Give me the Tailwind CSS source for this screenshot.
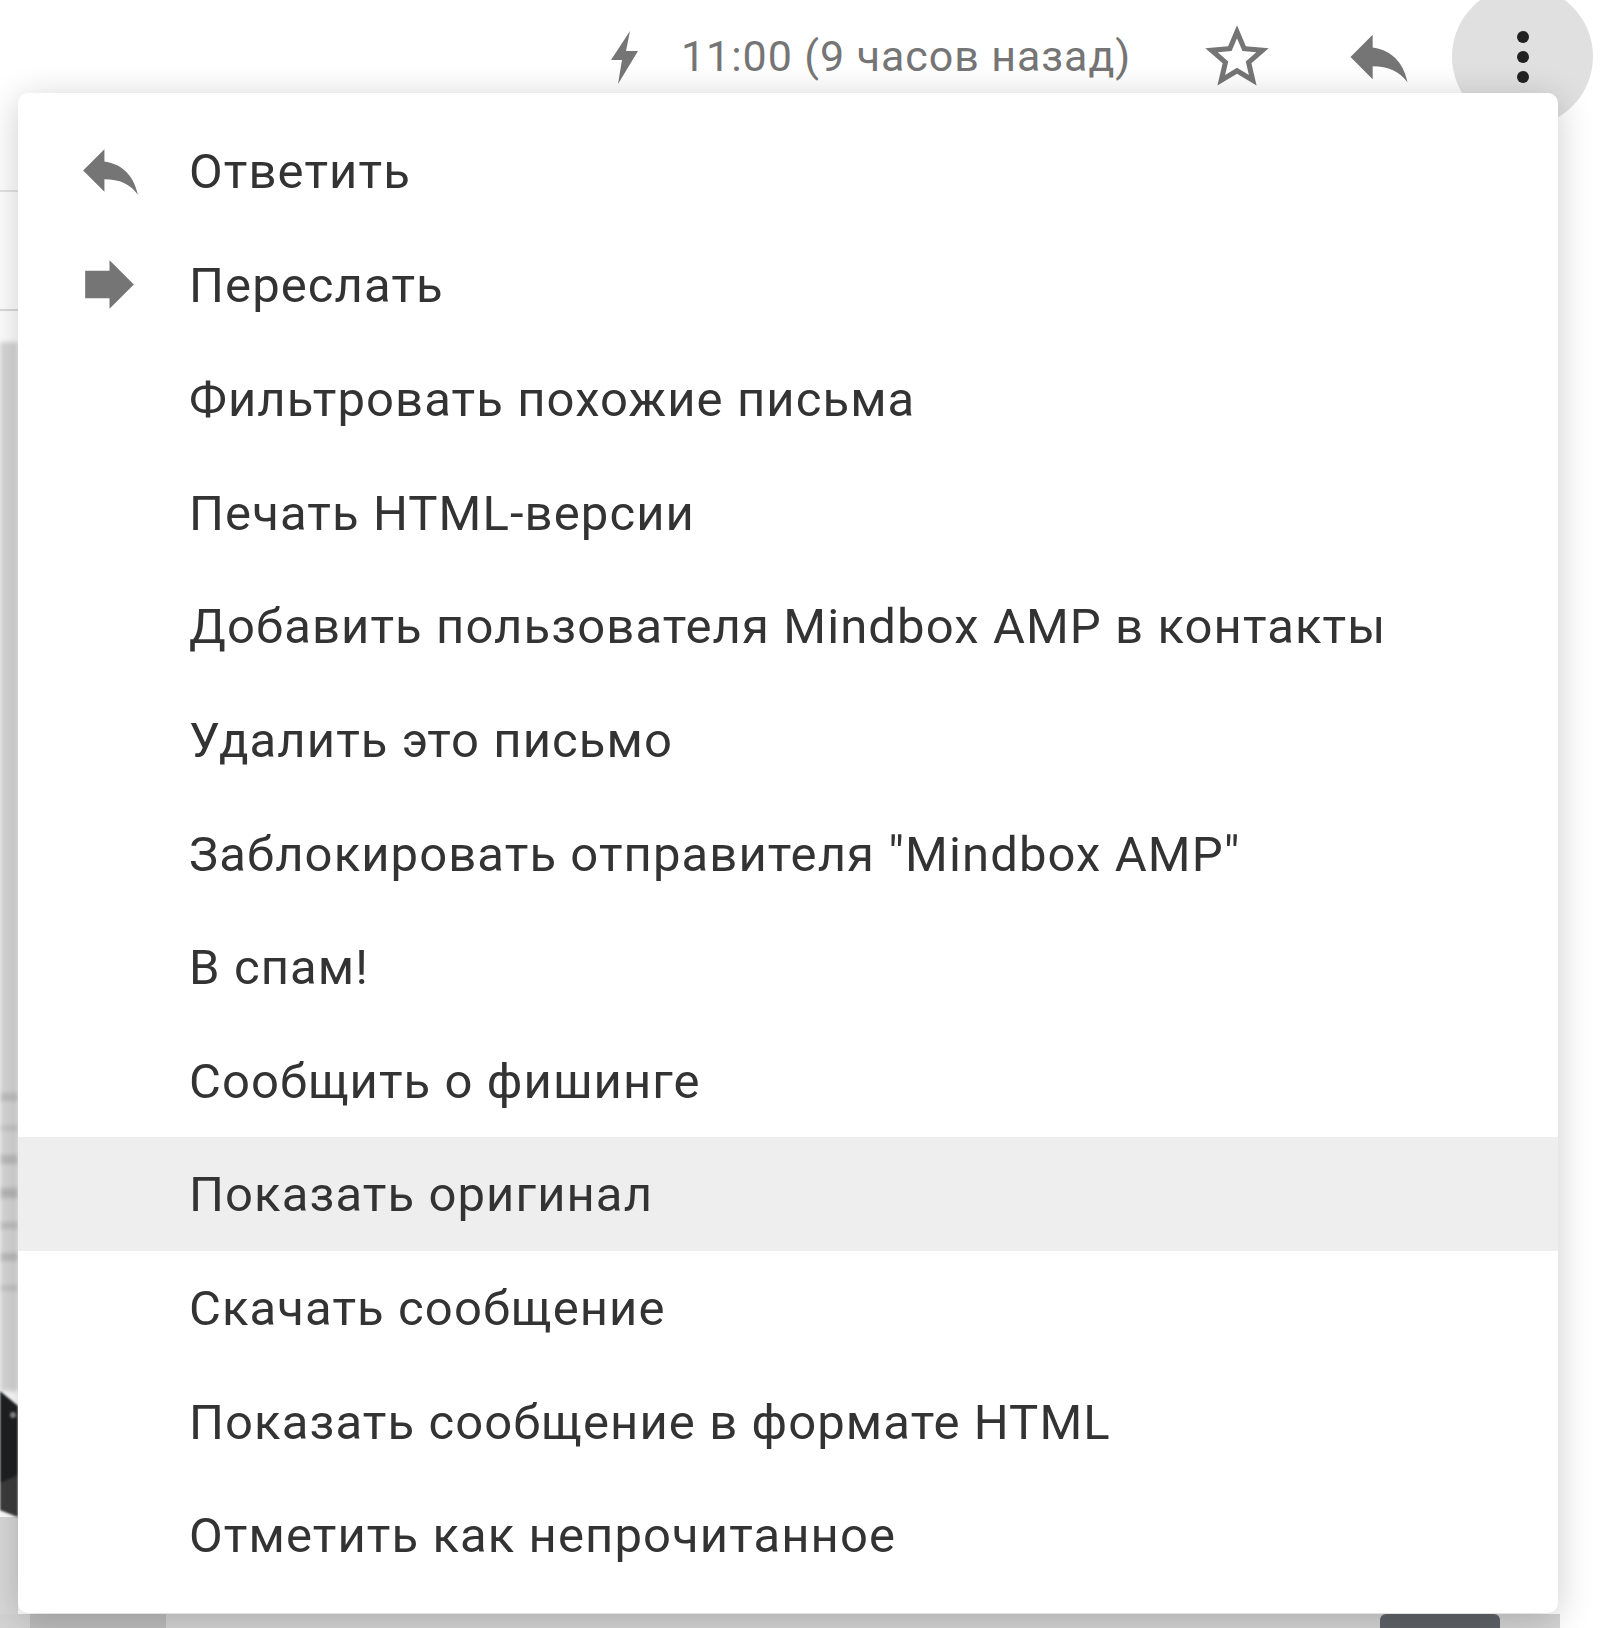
<!DOCTYPE html>
<html lang="ru">
<head>
  <meta charset="UTF-8" />
  <title>Gmail menu</title>
  <script src="https://cdn.jsdelivr.net/npm/@tailwindcss/browser@4"></script>
</head>
<body class="bg-white">
  <div class="relative w-[1600px] h-[1628px] overflow-hidden bg-white font-['Roboto',sans-serif]">

    <!-- message header -->
    <div class="flex items-center h-[114px] pl-[606px]">
      <svg class="w-[36px] h-[56px]" viewBox="0 0 36 56" fill="#757575"><path d="M24 2 5 31h11l-4 24 20-33H20z"/></svg>
      <span class="ml-[39px] mb-[2px] text-[43px] leading-none tracking-[0.93px] text-[#757575]">11:00 (9 часов назад)</span>
      <svg class="ml-[68px] w-[76px] h-[76px]" viewBox="0 0 24 24" fill="#757575"><path d="M22 9.24l-7.19-.62L12 2 9.19 8.63 2 9.24l5.46 4.73L5.82 21 12 17.27 18.18 21l-1.63-7.03L22 9.24zM12 15.4l-3.76 2.27 1-4.28-3.32-2.88 4.38-.38L12 6.1l1.71 4.04 4.38.38-3.32 2.88 1 4.28L12 15.4z"/></svg>
      <svg class="ml-[66px] w-[76px] h-[76px]" viewBox="0 0 24 24" fill="#757575"><path d="M10 9V5l-7 7 7 7v-4.1c5 0 8.5 1.6 11 5.1-1-5-4-10-11-11z"/></svg>
    </div>

    <!-- more button -->
    <div class="absolute left-[1452px] top-[-14px] w-[141px] h-[141px] rounded-full bg-[#e0e0e0] flex flex-col items-center justify-center gap-[8px]">
      <span class="w-[12px] h-[12px] rounded-full bg-[#222]"></span>
      <span class="w-[12px] h-[12px] rounded-full bg-[#222]"></span>
      <span class="w-[12px] h-[12px] rounded-full bg-[#222]"></span>
    </div>

    <!-- page behind the menu, left edge -->
    <div class="absolute left-0 top-[114px] w-[18px] h-[1500px] flex flex-col">
      <div class="h-[78px] border-b-2 border-[#e4e4e4]"></div>
      <div class="h-[119px] border-b-2 border-[#dcdcdc]"></div>
      <div class="h-[31px]"></div>
      <div class="h-[1049px] bg-[#d8d8d8] overflow-hidden flex flex-col gap-[24px] pt-[751px] blur-[2px]">
        <div class="h-[8px] bg-[#c0c0c0]"></div>
        <div class="h-[6px] bg-[#c6c6c6]"></div>
        <div class="h-[9px] bg-[#bcbcbc]"></div>
        <div class="h-[10px] bg-[#b8b8b8]"></div>
        <div class="h-[7px] bg-[#c0c0c0]"></div>
        <div class="h-[8px] bg-[#bcbcbc]"></div>
        <div class="h-[6px] bg-[#c4c4c4]"></div>
      </div>
      <svg class="w-[18px] h-[126px] blur-[1px] shrink-0" viewBox="0 0 18 126" fill="#1e2022"><path d="M0 0 18 15V126L0 119z"/><path d="M0 92 18 84V126L0 119z" fill="#3c3c3c"/><circle cx="13" cy="24" r="3" fill="#8a8a8a"/></svg>
      <div class="flex-1 bg-[#d8d8d8]"></div>
    </div>

    <!-- page behind the menu, bottom edge -->
    <div class="absolute left-0 top-[1614px] w-[1560px] h-[14px] bg-[#d4d4d4]">
      <div class="absolute left-[30px] w-[136px] h-full bg-[#bdbdbd]"></div>
      <div class="absolute left-[1380px] w-[120px] h-full rounded-t-[6px] bg-[#5f6368]"></div>
    </div>

    <!-- menu -->
    <div class="absolute left-[18px] top-[93px] w-[1540px] py-[21px] bg-white rounded-[10px] shadow-[0_6px_36px_rgba(0,0,0,0.2)] text-[49px] tracking-[1.1px] text-[#333]">
      <div class="flex items-center h-[113.67px]">
        <svg class="ml-[56px] mr-[42px] w-[73px] h-[73px]" viewBox="0 0 24 24" fill="#757575"><path d="M10 9V5l-7 7 7 7v-4.1c5 0 8.5 1.6 11 5.1-1-5-4-10-11-11z"/></svg>
        <span class="pt-[2px]">Ответить</span>
      </div>
      <div class="flex items-center h-[113.67px]">
        <svg class="ml-[55px] mr-[43px] w-[73px] h-[73px]" viewBox="0 0 24 24" fill="#757575"><path d="M12 7.5V4l8 8-8 8v-3.5H4v-9z"/></svg>
        <span class="pt-[2px]">Переслать</span>
      </div>
      <div class="flex items-center h-[113.67px] pl-[171px] pt-[3px]">Фильтровать похожие письма</div>
      <div class="flex items-center h-[113.67px] pl-[171px] pt-[3px]">Печать HTML-версии</div>
      <div class="flex items-center h-[113.67px] pl-[171px] pt-[3px]">Добавить пользователя Mindbox AMP в контакты</div>
      <div class="flex items-center h-[113.67px] pl-[171px] pt-[3px]">Удалить это письмо</div>
      <div class="flex items-center h-[113.67px] pl-[171px] pt-[3px]">Заблокировать отправителя "Mindbox AMP"</div>
      <div class="flex items-center h-[113.67px] pl-[171px] pt-[3px]">В спам!</div>
      <div class="flex items-center h-[113.67px] pl-[171px] pt-[3px]">Сообщить о фишинге</div>
      <div class="flex items-center h-[113.67px] pl-[171px] pt-[3px] bg-[#eeeeee]">Показать оригинал</div>
      <div class="flex items-center h-[113.67px] pl-[171px] pt-[3px]">Скачать сообщение</div>
      <div class="flex items-center h-[113.67px] pl-[171px] pt-[3px]">Показать сообщение в формате HTML</div>
      <div class="flex items-center h-[113.67px] pl-[171px] pt-[3px]">Отметить как непрочитанное</div>
    </div>
  </div>
</body>
</html>
